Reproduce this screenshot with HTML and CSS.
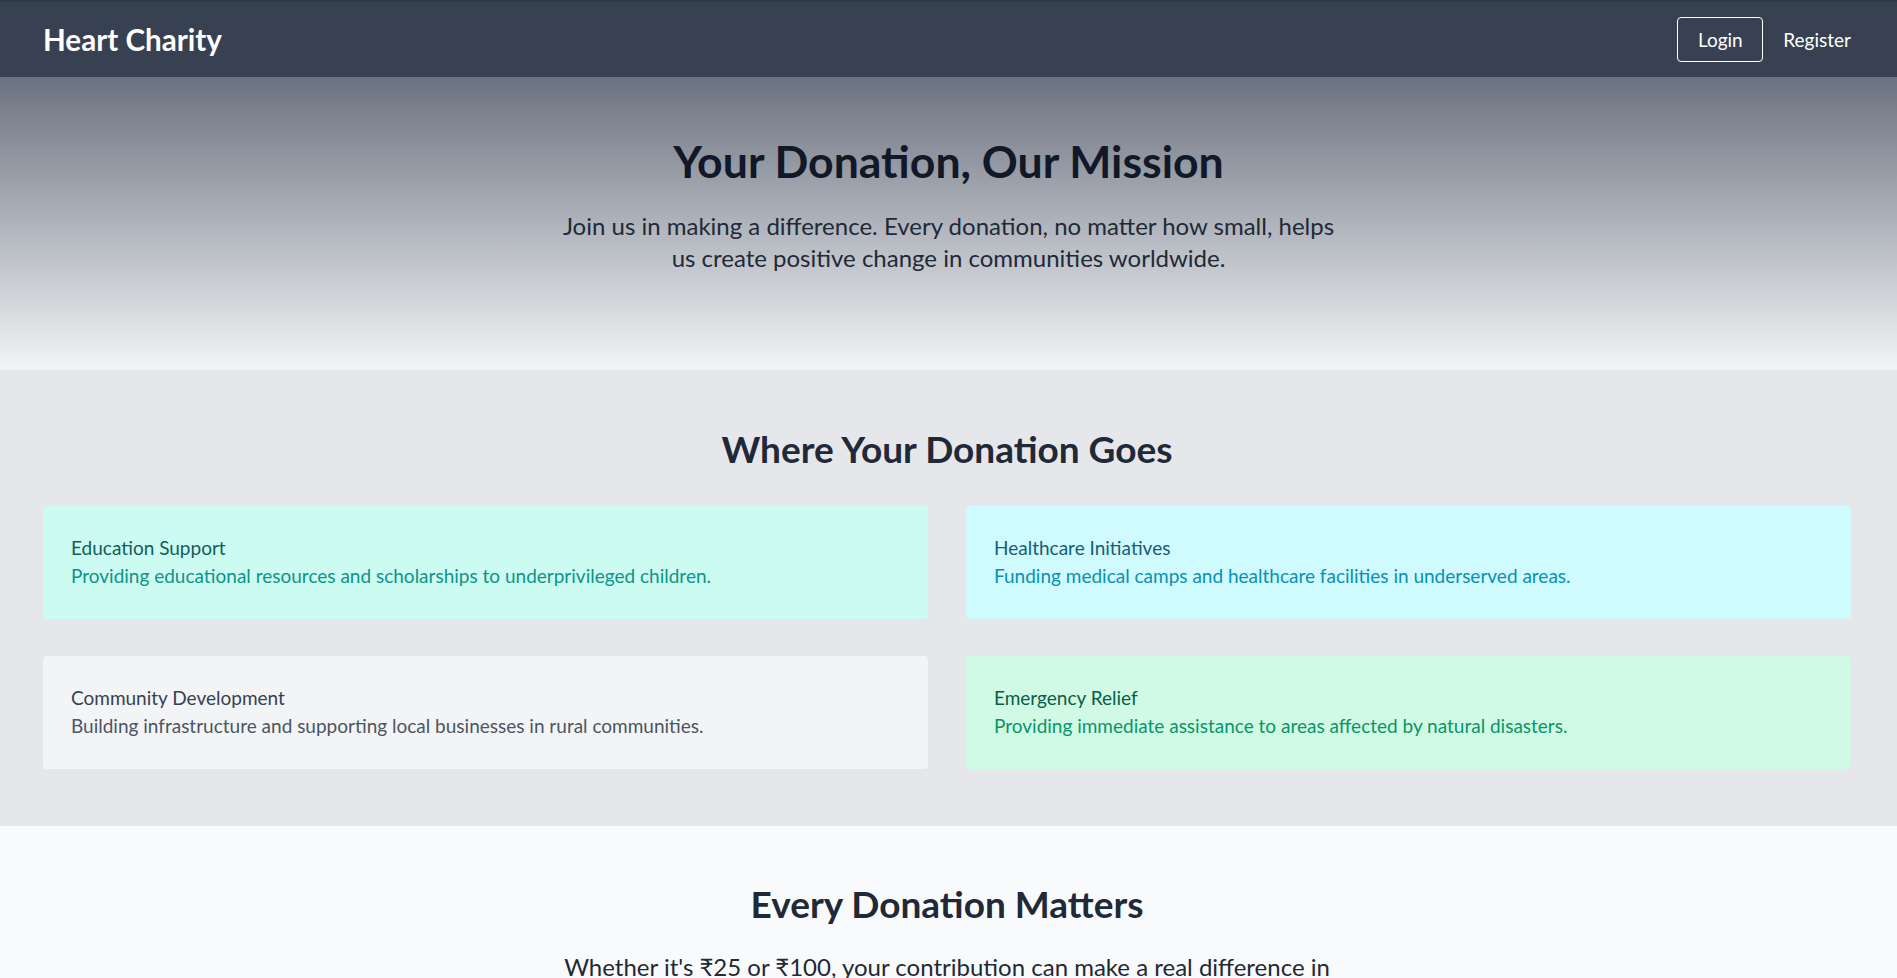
FILE: index.html
```html
<!DOCTYPE html>
<html lang="en">
<head>
<meta charset="utf-8">
<title>Heart Charity</title>
<link rel="stylesheet" href="styles.css">
</head>
<body>
<nav class="navbar">
  <a class="brand" href="#">Heart Charity</a>
  <div class="nav-links">
    <a class="btn-login" href="#">Login</a>
    <a class="link-register" href="#">Register</a>
  </div>
</nav>

<header class="hero">
  <h1 class="hero-title">Your Donation, Our Mission</h1>
  <p class="hero-text">Join us in making a difference. Every donation, no matter how small, helps us create positive change in communities worldwide.</p>
</header>

<section class="goes">
  <h2 class="section-title goes-title">Where Your Donation Goes</h2>
  <div class="card-grid">
    <div class="card card-teal">
      <h3 class="card-title">Education Support</h3>
      <p class="card-text">Providing educational resources and scholarships to underprivileged children.</p>
    </div>
    <div class="card card-cyan">
      <h3 class="card-title">Healthcare Initiatives</h3>
      <p class="card-text">Funding medical camps and healthcare facilities in underserved areas.</p>
    </div>
    <div class="card card-gray">
      <h3 class="card-title">Community Development</h3>
      <p class="card-text">Building infrastructure and supporting local businesses in rural communities.</p>
    </div>
    <div class="card card-green">
      <h3 class="card-title">Emergency Relief</h3>
      <p class="card-text">Providing immediate assistance to areas affected by natural disasters.</p>
    </div>
  </div>
</section>

<section class="matters">
  <h2 class="section-title matters-title">Every Donation Matters</h2>
  <p class="matters-text">Whether it's ₹25 or ₹100, your contribution can make a real difference in someone's life. Together, we can build a brighter future for all.</p>
</section>
</body>
</html>
```
FILE: styles.css
```css
* { box-sizing: border-box; }
html, body { margin: 0; padding: 0; }
body {
  font-family: Lato, "Noto Sans", Arial, sans-serif;
  background: #f9fafb;
  color: #1f2937;
}

.navbar {
  height: 77px;
  background: #374151;
  border-top: 2px solid #2b3c42;
  display: flex;
  align-items: center;
  justify-content: space-between;
  padding: 0 46px 0 43px;
  box-shadow: 0 2px 4px rgba(0,0,0,0.15);
}
.brand {
  color: #ffffff;
  font-weight: 700;
  font-size: 29.6px;
  line-height: 36px;
  text-decoration: none;
}
.nav-links {
  display: flex;
  align-items: center;
  gap: 20px;
}
.btn-login {
  color: #ffffff;
  text-decoration: none;
  font-size: 19px;
  line-height: 27px;
  padding: 8px 0;
  border: 1px solid #ffffff;
  border-radius: 4px;
  width: 86px;
  text-align: center;
}
.link-register {
  color: #ffffff;
  text-decoration: none;
  font-size: 19px;
  line-height: 27px;
}

.hero {
  background: linear-gradient(to bottom, #6b7280 0%, #f3f4f6 100%);
  padding: 59.5px 20px 95.5px;
  text-align: center;
}
.hero-title {
  margin: 0 0 25px;
  font-size: 44.6px;
  line-height: 48px;
  font-weight: 700;
  color: #111827;
}
.hero-text {
  margin: 0 auto;
  max-width: 785px;
  font-size: 24px;
  line-height: 32.5px;
  color: #1f2937;
}

.section-title {
  margin: 0;
  text-align: center;
  font-size: 37px;
  line-height: 40px;
  font-weight: 700;
  color: #1f2937;
}

.goes {
  background: #e5e7eb;
  padding: 58.5px 46px 57px 43px;
}
.goes-title { margin-bottom: 37.5px; }
.card-grid {
  display: grid;
  grid-template-columns: 1fr 1fr;
  column-gap: 38px;
  row-gap: 37.5px;
}
.card {
  border-radius: 4px;
  padding: 28px 28px 28.5px;
}
.card-title, .card-text {
  margin: 0;
  font-size: 19px;
  line-height: 28px;
  font-weight: 400;
}
.card-teal { background: #ccfbf1; }
.card-teal .card-title { color: #115e59; }
.card-teal .card-text { color: #0d9488; }
.card-cyan { background: #cffafe; }
.card-cyan .card-title { color: #155e75; }
.card-cyan .card-text { color: #0891b2; }
.card-gray { background: #f3f4f6; }
.card-gray .card-title { color: #374151; }
.card-gray .card-text { color: #4b5563; }
.card-green { background: #d1fae5; }
.card-green .card-title { color: #065f46; }
.card-green .card-text { color: #059669; }

.matters {
  background: #f9fafb;
  padding: 58.5px 46px 64px 43px;
  text-align: center;
}
.matters-title { margin-bottom: 26.5px; }
.matters-text {
  margin: 0 auto;
  max-width: 785px;
  font-size: 24px;
  line-height: 32.5px;
  color: #1f2937;
}
```
